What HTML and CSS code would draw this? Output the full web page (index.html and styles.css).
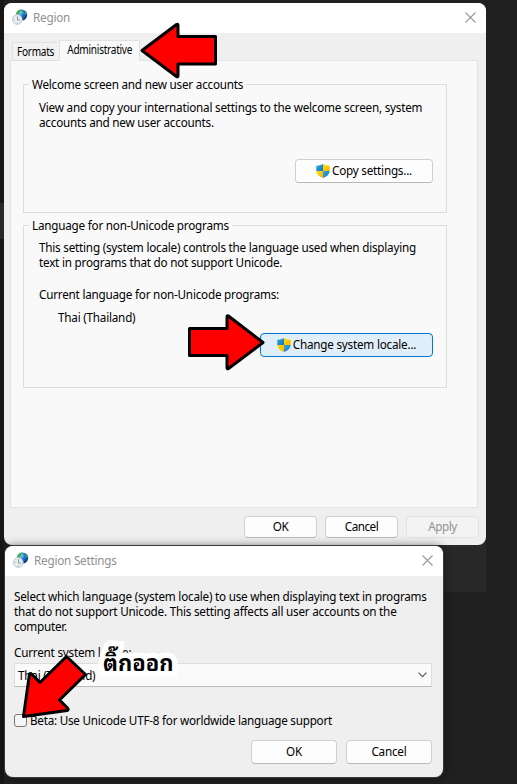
FILE: index.html
```html
<!DOCTYPE html>
<html lang="en">
<head>
<meta charset="utf-8">
<title>Region</title>
<link rel="stylesheet" href="styles.css">
</head>
<body>
<svg class="defs" width="0" height="0" aria-hidden="true">
  <defs>
    <radialGradient id="globe" cx=".38" cy=".28" r=".8"><stop offset="0" stop-color="#83d8f4"/><stop offset=".4" stop-color="#247bd0"/><stop offset="1" stop-color="#08236e"/></radialGradient>
    <linearGradient id="blue" x2="1" y2="1"><stop offset="0" stop-color="#32aae6"/><stop offset="1" stop-color="#1473c5"/></linearGradient>
    <linearGradient id="gold" x2="1" y2="1"><stop offset="0" stop-color="#ffdc00"/><stop offset="1" stop-color="#f7b500"/></linearGradient>
    <symbol id="region" viewBox="0 0 16 16">
      <circle cx="9.6" cy="6" r="5.6" fill="url(#globe)"/>
      <path d="M4.2 6C4.2 3 6 1 8.600 .6L9.500 1.500 7.800 3.300 7 5.500 5.500 6.500ZM12.300 1.300Q14.300 2.500 14.900 4.600L13.800 5.800 12.600 4.500 13.100 3Z" fill="#43b049"/>
      <circle cx="5.300" cy="10.500" r="4.900" fill="#e5edf0" stroke="#b4bfc4" stroke-width=".8"/>
      <path d="M5.500 7.300V11H8M5.300 13.700V14.500M1.600 10.500H2.300" fill="none" stroke="#72838c" stroke-width=".8"/>
    </symbol>
    <symbol id="shield" viewBox="0 0 14 14">
      <path d="M7 0Q4 1.900 .3 1.700V7H7Z" fill="url(#blue)"/>
      <path d="M7 0Q10 1.900 13.700 1.700V7H7Z" fill="url(#gold)"/>
      <path d="M.3 7Q.7 11.800 7 14V7Z" fill="url(#gold)"/>
      <path d="M13.700 7Q13.300 11.800 7 14V7Z" fill="url(#blue)"/>
    </symbol>
    <symbol id="close" viewBox="0 0 11 11"><path d="M.5 .5 10.500 10.500M10.500 .5 .5 10.500" fill="none" stroke="#999" stroke-width="1.100"/></symbol>
  </defs>
</svg>
<main class="desktop">
  <div class="patch patch-left"></div>
  <div class="patch patch-right"></div>

  <section class="window region">
    <header class="titlebar">
      <svg class="app-icon"><use href="#region"/></svg>
      <span class="title">Region</span>
      <svg class="close"><use href="#close"/></svg>
    </header>
    <nav class="tabs">
      <div class="tab"><span class="tab-text">Formats</span></div>
      <div class="tab active"><span class="tab-text">Administrative</span></div>
    </nav>
    <div class="panel">
      <fieldset class="group welcome">
        <legend>Welcome screen and new user accounts</legend>
        <p>View and copy your international settings to the welcome screen, system<br>accounts and new user accounts.</p>
        <button class="button copy"><svg class="shield"><use href="#shield"/></svg>Copy settings...</button>
      </fieldset>
      <fieldset class="group language">
        <legend>Language for non-Unicode programs</legend>
        <p>This setting (system locale) controls the language used when displaying<br>text in programs that do not support Unicode.</p>
        <p class="current">Current language for non-Unicode programs:</p>
        <p class="value">Thai (Thailand)</p>
        <button class="button change"><svg class="shield"><use href="#shield"/></svg>Change system locale...</button>
      </fieldset>
    </div>
    <footer class="actions">
      <button class="button"><span class="gdi">OK</span></button>
      <button class="button"><span class="gdi">Cancel</span></button>
      <button class="button disabled"><span class="gdi">Apply</span></button>
    </footer>
  </section>

  <section class="window settings">
    <header class="titlebar">
      <svg class="app-icon"><use href="#region"/></svg>
      <span class="title">Region Settings</span>
      <svg class="close"><use href="#close"/></svg>
    </header>
    <div class="content">
      <p>Select which language (system locale) to use when displaying text in programs<br>that do not support Unicode. This setting affects all user accounts on the<br>computer.</p>
      <p class="label">Current system locale:</p>
      <div class="select"><span>Thai (Thailand)</span><svg class="chevron" viewBox="0 0 9 6"><path d="M.5 .7 4.500 4.700 8.500 .7" fill="none" stroke="#555" stroke-width="1.100"/></svg></div>
      <div class="check"><span class="box"></span><span>Beta: Use Unicode UTF-8 for worldwide language support</span></div>
      <footer class="confirm">
        <button class="button">OK</button>
        <button class="button">Cancel</button>
      </footer>
    </div>
  </section>

  <div class="note"><span lang="th">ติ๊กออก</span></div>
  <svg class="arrow arrow-tab" viewBox="0 0 80 60"><path d="M3 29.500 37.500 3.500Q39 2.500 39 4.500V15.500H76.500V43H39V54.500Q39 56.500 37.500 55.500Z"/></svg>
  <svg class="arrow arrow-locale" viewBox="0 0 80 60"><path d="M3.500 16.500H41V5Q41 3 42.500 4L77 30.500 42.500 56.500Q41 57.500 41 55.500V43.500H3.500Z"/></svg>
  <svg class="arrow arrow-check" viewBox="0 0 70 70"><path d="M3.500 64.500 9.500 22Q10.500 21 12 22.500L20 30.500 46.500 4.500 65.500 22.500 39.500 48 47.500 56Q49 58 47 58.500Z"/></svg>
</main>
</body>
</html>
```
FILE: styles.css
```css
* { box-sizing: border-box; }
body { margin: 0; background: #202020; font: 11.7px/15px "Noto Sans", "Open Sans", sans-serif; letter-spacing: -.215px; color: #000; }
p { margin: 0; white-space: nowrap; }
.defs { position: absolute; }
.desktop { position: relative; width: 517px; height: 784px; overflow: hidden; background: linear-gradient(90deg, #191715 0 4px, #202020 4px); }
.patch { position: absolute; background: #282828; }
.patch-left { left: 0; top: 203px; width: 4px; height: 36px; }
.patch-right { left: 440px; top: 530px; width: 46px; height: 62px; }
.window { position: absolute; display: flex; flex-direction: column; overflow: hidden; border-radius: 8px; background: #efefef; }
.region { left: 4px; top: 3px; width: 482px; height: 542px; }
.settings { left: 5px; top: 546px; width: 438px; height: 231px; box-shadow: 0 0 0 1px #3a3a3a, 0 0 10px #0008; }
.titlebar { display: flex; flex: none; height: 30px; align-items: center; padding: 0 10px 2px 8px; background: #fff; color: #909090; }
.app-icon { width: 16px; height: 16px; margin-right: 5px; }
.close { width: 11px; height: 11px; margin-left: auto; }
.tabs { display: flex; align-items: flex-end; height: 28px; padding-left: 8px; z-index: 1; margin-bottom: -1px; }
.tab { display: flex; width: 48px; height: 19px; align-items: center; justify-content: center; border: 1px solid #e2e2e2; border-bottom-color: #dedede; background: #f2f2f2; }
.tab.active { width: 81px; height: 21px; border-bottom: 0; background: #f9f9f9; margin-left: -1px; padding-bottom: 3px; }
.tab-text { letter-spacing: -.3px; transform: scaleX(.86); }
.gdi { letter-spacing: -.5px; }
.panel { width: 468px; height: 448px; margin-left: 6px; padding: 16px 0 0 12px; border: 1px solid #e3e3e3; background: #f9f9f9; }
.group { display: flex; flex-direction: column; position: relative; width: 424px; margin: 0; padding: 0 13px 0 15px; border: 1px solid #dcdcdc; min-width: 0; }
legend { margin-left: -10px; padding: 0 3px; height: 15px; }
.welcome { height: 136px; }
.language { height: 170px; margin-top: 5px; }
.group p { margin-top: 8px; }
.language p { margin-top: 7px; }
.language .current { margin-top: 17px; }
.language .value { margin: 8px 0 0 19px; }
.button { display: flex; align-items: center; justify-content: center; height: 22px; padding: 0 0 1px; border: 1px solid #d0d0d0; border-bottom-color: #b9b9b9; border-radius: 4px; background: #fdfdfd; color: #000; font: inherit; letter-spacing: inherit; white-space: nowrap; }
.shield { width: 14px; height: 14px; margin-right: 2px; }
.copy { width: 138px; height: 24px; margin: 29px 0 0 auto; }
.change { width: 173px; height: 24px; margin: 8px 0 0 auto; border-color: #0078d4; background: #e0eef9; }
.actions { display: flex; gap: 8px; padding: 8px 6px 0 240px; }
.actions .button { width: 73px; }
.button.disabled { color: #919191; border-color: #e2e2e2; background: #f3f3f3; }
.content { padding: 13px 11px 0 9px; }
.label { margin-top: 11px; }
.select { display: flex; align-items: center; justify-content: space-between; height: 24px; margin-top: 3px; padding: 0 4px 0 3px; border: 1px solid #dedede; border-bottom-color: #bbb; background: #fafafa; }
.chevron { width: 9px; height: 6px; }
.check { display: flex; align-items: center; margin-top: 26px; gap: 3px; white-space: nowrap; }
.check span + span { letter-spacing: -.24px; }
.box { width: 13px; height: 13px; border: 1px solid #777; border-radius: 3px; background: #f5f5f5; }
.confirm { display: flex; justify-content: flex-end; gap: 9px; margin-top: 12px; }
.confirm .button { width: 86px; height: 24px; }
.arrow { position: absolute; overflow: visible; fill: #f00; stroke: #000; stroke-width: 3px; stroke-linejoin: round; }
.arrow-tab { left: 139px; top: 21px; width: 80px; height: 60px; }
.arrow-locale { left: 186px; top: 312px; width: 80px; height: 60px; }
.arrow-check { left: 20px; top: 652px; width: 70px; height: 70px; }
.note { position: absolute; left: 103px; top: 646px; font: 700 22px/30px "Noto Sans Thai Looped", "Loma", "Garuda", "Waree", "Noto Sans", sans-serif; letter-spacing: 0; -webkit-text-stroke: 11px #fff; paint-order: stroke fill; stroke-linejoin: round; }
```
